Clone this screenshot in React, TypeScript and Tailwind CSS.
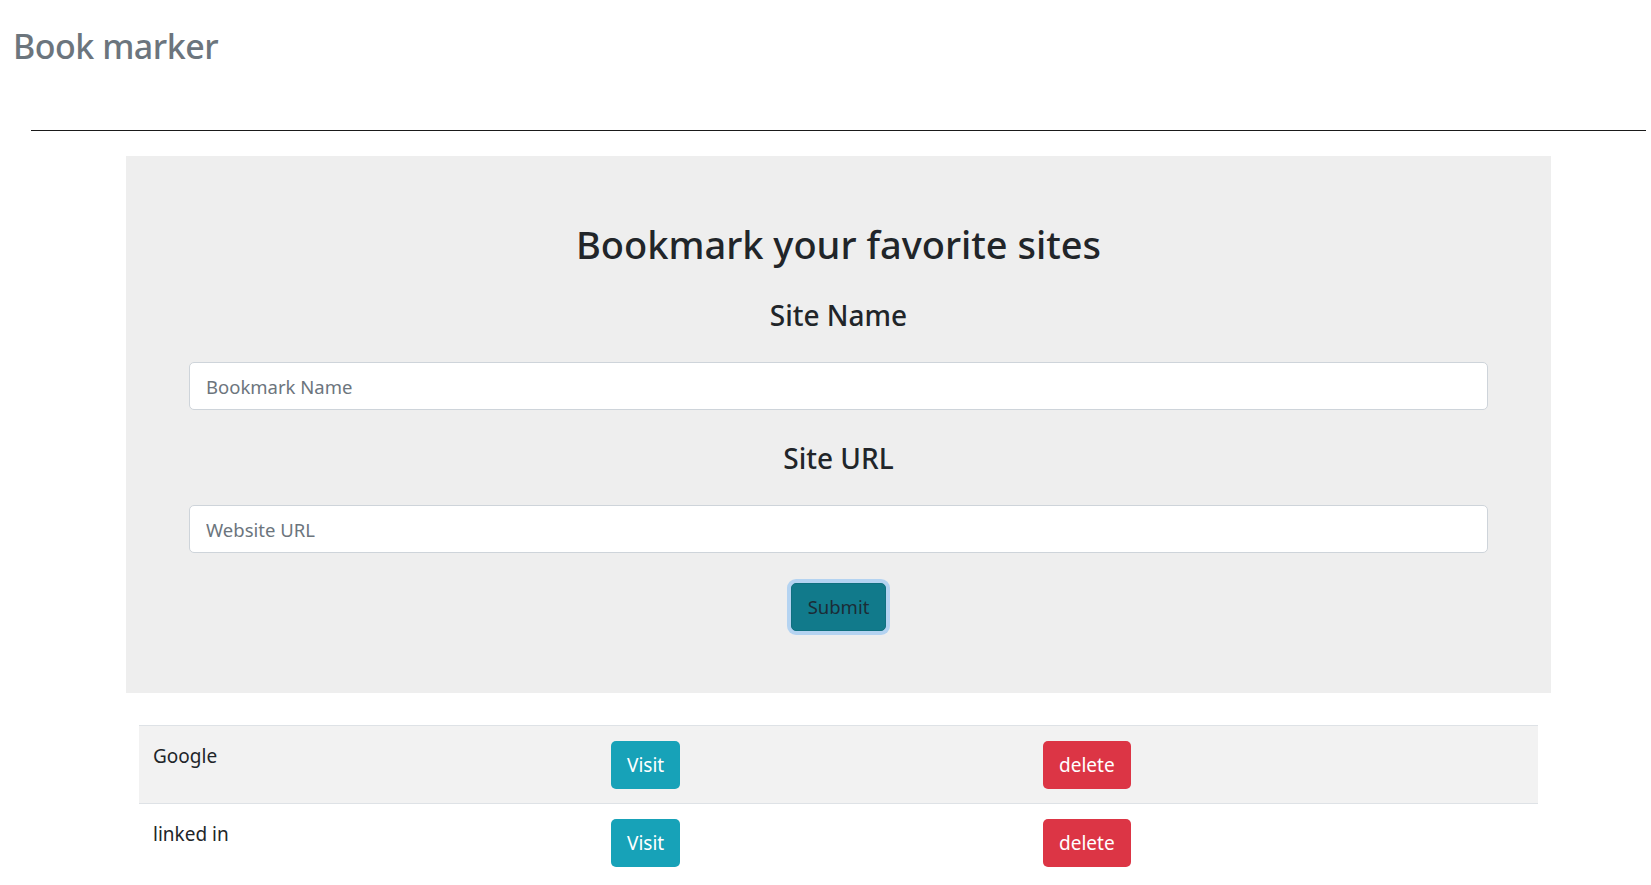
const bookmarks = [
  { name: "Google", url: "https://www.google.com" },
  { name: "linked in", url: "https://www.linkedin.com" },
];

const App = () => {
  return (
    <div className="min-h-screen bg-white font-['Noto_Sans',sans-serif] text-[#212529]">
      <header className="pt-[26px] pl-[13px]">
        <h1 className="text-[34px] leading-[41px] tracking-[-0.5px] font-medium text-[#6c757d]">Book marker</h1>
      </header>
      <div className="mt-[63px] ml-[31px] mr-[5px] h-px bg-[#1a1a1a]" />

      <section className="mx-[126px] mt-[25px] w-[1425px] bg-[#eeeeee] px-[63px] pt-[64px] pb-[62px] flex flex-col items-center">
        <h2 className="text-[38px] leading-[48px] font-medium">Bookmark your favorite sites</h2>

        <h3 className="mt-[30px] text-[28px] leading-[34px] font-medium">Site Name</h3>
        <input
          type="text"
          placeholder="Bookmark Name"
          className="mt-[30px] w-full h-[48px] rounded-[5px] border border-[#ced4da] bg-white px-[16px] text-[18.5px] placeholder:text-[#6c757d] outline-none"
        />

        <h3 className="mt-[31px] text-[28px] leading-[34px] font-medium">Site URL</h3>
        <input
          type="text"
          placeholder="Website URL"
          className="mt-[30px] w-full h-[48px] rounded-[5px] border border-[#ced4da] bg-white px-[16px] text-[18.5px] placeholder:text-[#6c757d] outline-none"
        />

        <button className="mt-[30px] h-[48px] px-[16px] rounded-[5px] border border-[#10707f] bg-[#117a8b] text-[18.5px] text-[#1c2c36] shadow-[0_0_0_4px_#b4d3f1]">
          Submit
        </button>
      </section>

      <div className="mt-[32px] mx-[139px] w-[1399px]">
        {bookmarks.map((b, i) => (
          <div
            key={i}
            className={`grid grid-cols-[460px_432px_1fr] h-[78px] border-t border-[#dee2e6] ${i % 2 === 0 ? "bg-[#f2f2f2]" : "bg-white"}`}
          >
            <div className="pl-[14px] pt-[15px] text-[19px] leading-[30px]">{b.name}</div>
            <div className="pl-[12px] pt-[15px]">
              <button className="h-[48px] px-[16px] rounded-[5px] bg-[#17a2b8] text-[19px] text-white">Visit</button>
            </div>
            <div className="pl-[12px] pt-[15px]">
              <button className="h-[48px] px-[16px] rounded-[5px] bg-[#dc3545] text-[19px] text-white">delete</button>
            </div>
          </div>
        ))}
      </div>
    </div>
  );
};

export default App;
